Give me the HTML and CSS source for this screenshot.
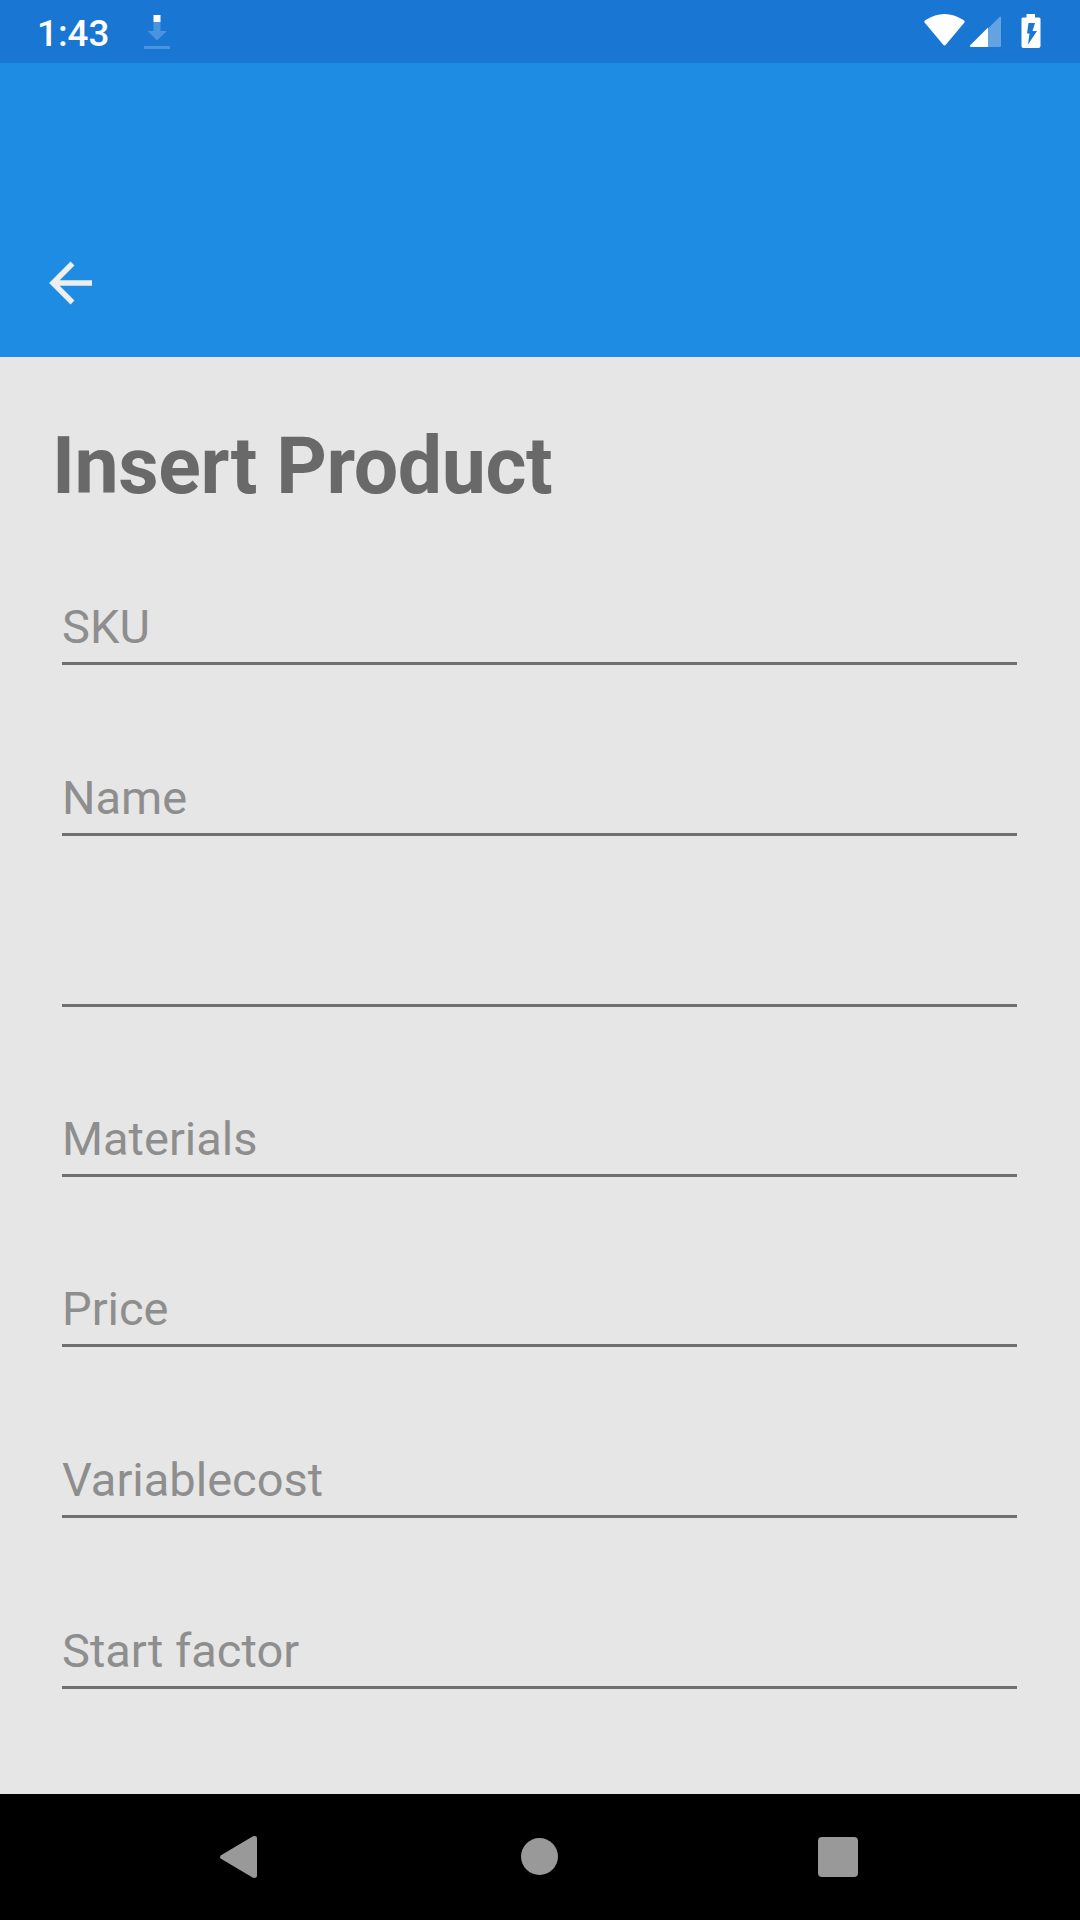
FILE: index.html
```html
<!DOCTYPE html>
<html lang="en">
<head>
<meta charset="utf-8">
<title>Insert Product</title>
<link rel="stylesheet" href="styles.css">
</head>
<body>
<div class="screen">
  <header class="status">
    <span class="clock">1:43</span>
    <svg class="download" width="26" height="36" viewBox="0 0 26 36"><path fill="#fff" d="M9.500 1h7v7h-7z"/><path fill="#4a93dd" d="M9.500 8h7v9h6.500L13 26.500 3.500 17h6zM0 32h26v3H0z"/></svg>
    <div class="indicators">
      <svg class="wifi" width="42" height="34" viewBox="0 0 42 34"><path fill="#fff" d="M1.500 6Q20.500-6 39.500 6Q41.500 7.500 40 9L22 30.500q-1.500 2-3 0L1 9Q-.5 7.500 1.500 6z"/></svg>
      <svg class="signal" width="32" height="32" viewBox="0 0 32 32"><path fill="#63a3e2" d="M18 13.500L29.500 2q1.500-1 1.500.5V31q0 1-1 1H18z"/><path fill="#fff" d="M18 12.500V32H1q-2-.5-.5-2z"/></svg>
      <svg class="battery" width="20" height="34" viewBox="0 0 20 34"><path fill="#fff" d="M5.500 0H14v3.500h4q1.500 0 1.500 1.500v27q0 2-2 2h-15q-2 0-2-2V5Q.5 3.500 2 3.500h3.500z"/><path fill="#1976d2" d="M7.500 9H14l-2.500 8h4.500L7 30.500l1.500-11H6z"/></svg>
    </div>
  </header>
  <div class="appbar">
    <svg class="back" width="44" height="44" viewBox="0 0 44 44"><path fill="none" stroke="#eee" stroke-width="5.500" d="M43 22H4M23.500 2.500L4 22l19.500 19.500"/></svg>
  </div>
  <main class="form">
    <h1 class="title">Insert Product</h1>
    <div class="field">SKU</div>
    <div class="field">Name</div>
    <div class="field tight"></div>
    <div class="field tight">Materials</div>
    <div class="field">Price</div>
    <div class="field">Variablecost</div>
    <div class="field">Start factor</div>
  </main>
  <nav class="nav">
    <svg class="nav-back" width="37" height="42" viewBox="0 0 37 42"><path fill="#999" d="M37 2.500v37q0 3-4 2.300L1 22.800q-2-1.800 0-3.600L33 .2q4-.7 4 2.300z"/></svg>
    <svg class="nav-home" width="37" height="37" viewBox="0 0 37 37"><circle cx="18.500" cy="18.500" r="18.500" fill="#999"/></svg>
    <svg class="nav-recent" width="40" height="40" viewBox="0 0 40 40"><rect width="40" height="40" rx="4" fill="#999"/></svg>
  </nav>
</div>
</body>
</html>
```
FILE: styles.css
```css
* { box-sizing: border-box; }
body { margin: 0; font-family: Roboto, sans-serif; }
svg { display: block; flex: none; }
.screen { width: 1080px; height: 1920px; display: flex; flex-direction: column; background: #e6e6e6; }
.status, .appbar, .nav { flex: none; }
.status { height: 63px; background: #1976d2; display: flex; align-items: flex-start; padding: 14px 39px 0 37px; }
.clock { width: 107px; color: #fff; font-size: 36.750px; font-weight: 500; line-height: 40px; }
.indicators { margin-left: auto; display: flex; }
.signal { margin: 1px 19px 0 4px; }
.appbar { height: 294px; background: #1f8ce3; padding: 198px 0 0 49px; }
.form { flex: 1; min-height: 0; padding: 64px 63px 0 62px; }
.title { margin: 0 0 0 -10px; height: 90px; line-height: 90px; font-size: 78.750px; letter-spacing: -0.420px; font-weight: 700; color: #696969; white-space: nowrap; }
.field { height: 60px; margin-bottom: 111px; border-bottom: 3px solid #6f6f6f; font-size: 47px; line-height: 44px; color: #8e8e8e; }
.tight { margin-bottom: 110px; }
.title + .field { margin-top: 94px; }
.nav { height: 126px; background: #000; display: flex; align-items: center; padding-left: 220px; }
.nav-home { margin-left: 264px; position: relative; top: -1px; }
.nav-recent { margin-left: 260px; }
```
